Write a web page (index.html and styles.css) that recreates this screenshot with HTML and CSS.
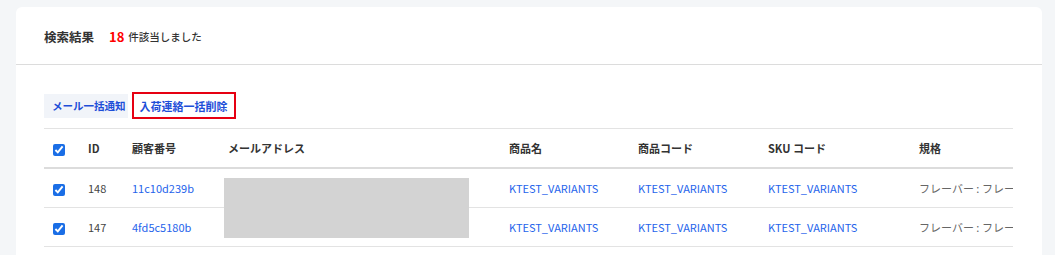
FILE: index.html
```html
<!DOCTYPE html>
<html lang="ja">
<head>
    <meta charset="UTF-8">
    <meta name="viewport" content="width=device-width, initial-scale=1.0">
    <title>入荷連絡 検索結果</title>
    <link rel="stylesheet" href="styles.css">
</head>
<body>
    <div class="card">
        <div class="card-header">
            <span class="result-title">検索結果</span>
            <span class="result-count">18</span>
            <span class="result-text">件該当しました</span>
        </div>

        <div class="card-body">
            <div class="actions">
                <button class="action-btn">メール一括通知</button>
                <button class="action-btn selected">入荷連絡一括削除</button>
            </div>

            <div class="table-wrap">
                <table class="result-table">
                    <colgroup>
                        <col class="col-check">
                        <col class="col-id">
                        <col class="col-customer">
                        <col class="col-mail">
                        <col class="col-name">
                        <col class="col-code">
                        <col class="col-sku">
                        <col class="col-spec">
                    </colgroup>
                    <thead>
                        <tr>
                            <th><input type="checkbox" checked aria-label="すべて選択"></th>
                            <th>ID</th>
                            <th>顧客番号</th>
                            <th>メールアドレス</th>
                            <th>商品名</th>
                            <th>商品コード</th>
                            <th>SKU コード</th>
                            <th>規格</th>
                        </tr>
                    </thead>
                    <tbody>
                        <tr>
                            <td><input type="checkbox" checked aria-label="選択"></td>
                            <td>148</td>
                            <td><a href="#">11c10d239b</a></td>
                            <td></td>
                            <td><a href="#">KTEST_VARIANTS</a></td>
                            <td><a href="#">KTEST_VARIANTS</a></td>
                            <td><a href="#">KTEST_VARIANTS</a></td>
                            <td class="spec">フレーバー : フレーバー味</td>
                        </tr>
                        <tr>
                            <td><input type="checkbox" checked aria-label="選択"></td>
                            <td>147</td>
                            <td><a href="#">4fd5c5180b</a></td>
                            <td></td>
                            <td><a href="#">KTEST_VARIANTS</a></td>
                            <td><a href="#">KTEST_VARIANTS</a></td>
                            <td><a href="#">KTEST_VARIANTS</a></td>
                            <td class="spec">フレーバー : フレーバー味</td>
                        </tr>
                    </tbody>
                </table>
                <div class="mail-mask"></div>
            </div>
        </div>
    </div>
</body>
</html>
```

FILE: styles.css
```css
* {
    margin: 0;
    padding: 0;
    box-sizing: border-box;
    font-family: "Noto Sans CJK JP", "Noto Sans", sans-serif;
}

body {
    background-color: #f4f6f8;
    padding: 7px 13px 0 16px;
    overflow: hidden;
}

.card {
    background-color: #fff;
    border-radius: 6px;
    height: 260px;
}

.card-header {
    height: 58px;
    padding: 1px 28px 0;
    display: flex;
    align-items: center;
    border-bottom: 1px solid #dcdcdc;
    color: #333;
}

.result-title {
    font-size: 12.5px;
    font-weight: bold;
    margin-right: 15px;
}

.result-count {
    color: #f00;
    font-size: 13px;
    font-weight: bold;
    margin-right: 4px;
}

.result-text {
    font-size: 10.5px;
    font-weight: 500;
}

.card-body {
    padding: 27px 29px 0 28px;
}

.actions {
    display: flex;
    align-items: center;
    gap: 4px;
    margin-bottom: 9px;
}

.action-btn {
    height: 24px;
    padding: 0 2px 0 8px;
    border: none;
    background-color: #f1f4f9;
    color: #1d4ed8;
    font-size: 10.5px;
    font-weight: bold;
    cursor: pointer;
}

.action-btn.selected {
    height: 27px;
    padding: 0 6px;
    font-size: 11px;
    background-color: #fff;
    border: 2px solid #e60012;
}

.table-wrap {
    position: relative;
    overflow: hidden;
}

.result-table {
    table-layout: fixed;
    width: 1067px;
    border-collapse: collapse;
}

.col-check { width: 36px; }
.col-id { width: 44px; }
.col-customer { width: 96px; }
.col-mail { width: 281px; }
.col-name { width: 129px; }
.col-code { width: 130px; }
.col-sku { width: 151px; }
.col-spec { width: 200px; }

.result-table th,
.result-table td {
    text-align: left;
    padding: 0 8px;
    font-size: 11px;
    white-space: nowrap;
}

.result-table th {
    height: 39px;
    padding-top: 1px;
    color: #333;
    font-weight: bold;
    border-top: 1px solid #e3e3e3;
    border-bottom: 2px solid #dcdcdc;
}

.result-table td {
    height: 39px;
    color: #444;
    border-bottom: 1px solid #e3e3e3;
}

.result-table tbody tr:first-child td {
    height: 40px;
}

.result-table td.spec {
    color: #666;
}

.result-table a {
    color: #2563eb;
    text-decoration: none;
}

.result-table input[type="checkbox"] {
    width: 12px;
    height: 12px;
    margin: 0 0 0 1px;
    vertical-align: middle;
    accent-color: #1a6ee6;
}

.mail-mask {
    position: absolute;
    left: 180px;
    top: 50px;
    width: 245px;
    height: 60px;
    background-color: #d3d3d3;
}
```
